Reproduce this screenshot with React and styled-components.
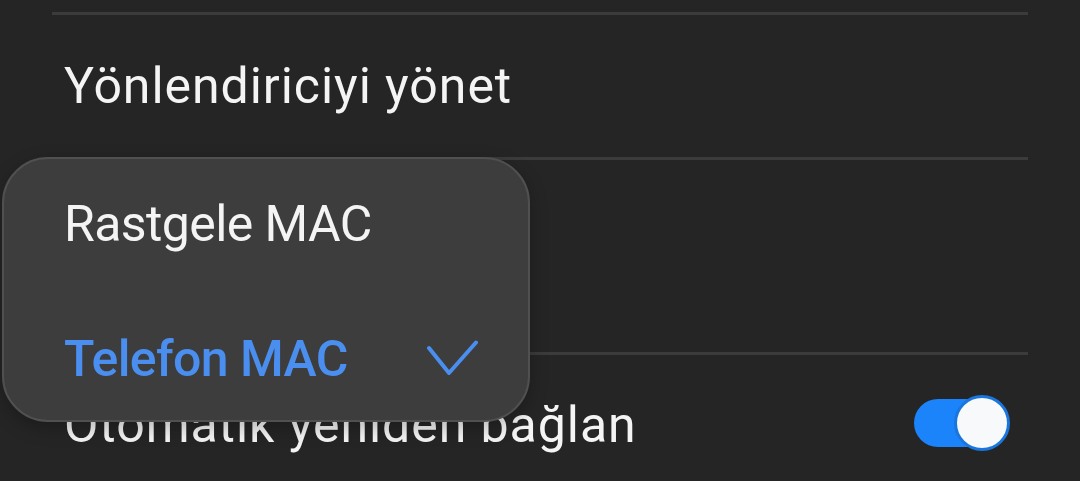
import React from "react";
import styled, { createGlobalStyle } from "styled-components";

const GlobalStyle = createGlobalStyle`
  html, body {
    margin: 0;
    padding: 0;
    background: #252525;
    font-family: Roboto, "Noto Sans", "Liberation Sans", sans-serif;
  }
  * { box-sizing: border-box; }
`;

const Screen = styled.div`
  position: relative;
  width: 1080px;
  height: 481px;
  overflow: hidden;
  background: #252525;
`;

const List = styled.div`
  display: flex;
  flex-direction: column;
  margin: 0 52px;
  padding-top: 12px;
`;

const Row = styled.div`
  display: flex;
  align-items: center;
  justify-content: space-between;
  height: ${(p) => p.$height}px;
  padding: 0 18px 0 12px;
  border-top: 3px solid #3b3b3b;
`;

const Title = styled.span`
  color: #f4f4f4;
  font-size: 50px;
  line-height: 1;
  letter-spacing: 0.95px;
`;

const Switch = styled.div`
  position: relative;
  width: 94px;
  height: 48px;
  border-radius: 24px;
  background: #1b84fb;
  margin-top: -4px;
  margin-right: 2px;
`;

const Knob = styled.div`
  position: absolute;
  right: -2px;
  top: 50%;
  width: 56px;
  height: 56px;
  margin-top: -28px;
  border-radius: 50%;
  background: #f8f9fb;
  border: 3px solid #1a76dc;
`;

const Menu = styled.div`
  position: absolute;
  left: 2px;
  top: 157px;
  width: 528px;
  height: 265px;
  border-radius: 46px;
  background: #3d3d3d;
  border: 2px solid #505050;
  display: flex;
  flex-direction: column;
  gap: 5px;
  box-shadow: 0 6px 18px rgba(0, 0, 0, 0.25);
`;

const MenuItem = styled.div`
  display: flex;
  align-items: center;
  justify-content: space-between;
  height: 130px;
  flex-shrink: 0;
  padding: 0 50px 0 60px;
  font-size: 50px;
  line-height: 1;
  letter-spacing: -0.6px;
  font-weight: ${(p) => (p.$selected ? 500 : 400)};
  color: ${(p) => (p.$selected ? "#4a8ef0" : "#f4f4f4")};
`;

const CheckIcon = styled.svg`
  margin-top: -2px;
`;

const Check = () => (
  <CheckIcon width="54" height="36" viewBox="0 0 54 36" fill="none">
    <path
      d="M5 8 L25 33 L52 2.5"
      stroke="#4a8ef0"
      strokeWidth="4"
      strokeLinecap="round"
      strokeLinejoin="round"
    />
  </CheckIcon>
);

export default function App() {
  return (
    <Screen>
      <GlobalStyle />
      <List>
        <Row $height={145}>
          <Title>Yönlendiriciyi yönet</Title>
        </Row>
        <Row $height={195} />
        <Row $height={142}>
          <Title>Otomatik yeniden bağlan</Title>
          <Switch>
            <Knob />
          </Switch>
        </Row>
      </List>
      <Menu>
        <MenuItem>Rastgele MAC</MenuItem>
        <MenuItem $selected>
          Telefon MAC
          <Check />
        </MenuItem>
      </Menu>
    </Screen>
  );
}
